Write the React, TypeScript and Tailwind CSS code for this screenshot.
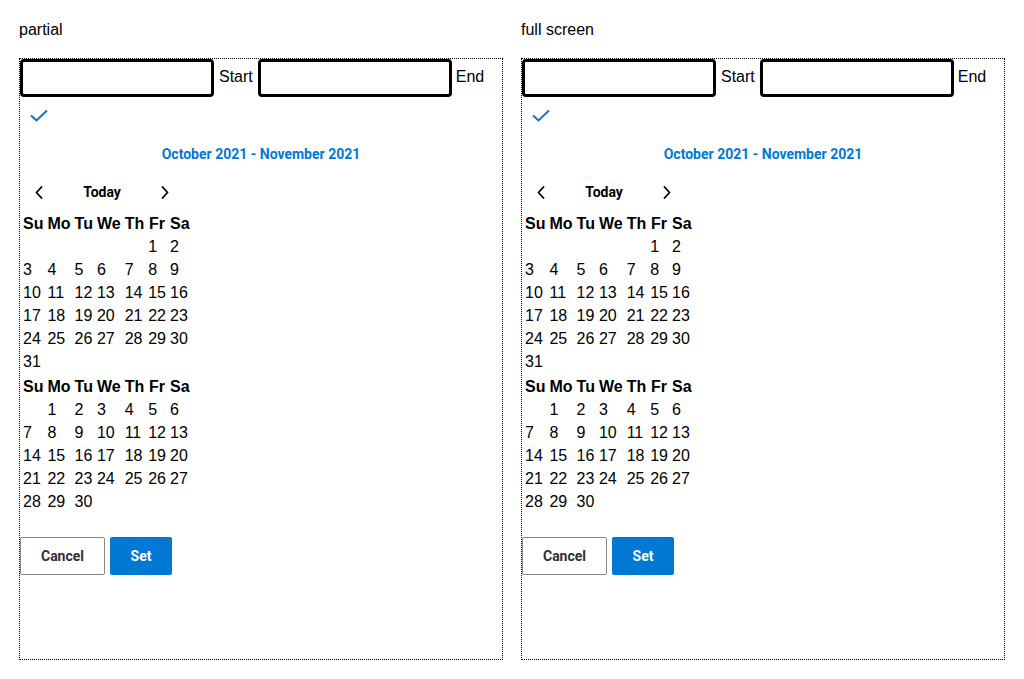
const octoberWeeks: (number | null)[][] = [
  [null, null, null, null, null, 1, 2],
  [3, 4, 5, 6, 7, 8, 9],
  [10, 11, 12, 13, 14, 15, 16],
  [17, 18, 19, 20, 21, 22, 23],
  [24, 25, 26, 27, 28, 29, 30],
  [31],
];

const novemberWeeks: (number | null)[][] = [
  [null, 1, 2, 3, 4, 5, 6],
  [7, 8, 9, 10, 11, 12, 13],
  [14, 15, 16, 17, 18, 19, 20],
  [21, 22, 23, 24, 25, 26, 27],
  [28, 29, 30],
];

const dayNames = ["Su", "Mo", "Tu", "We", "Th", "Fr", "Sa"];

function MonthTable({ weeks }: { weeks: (number | null)[][] }) {
  return (
    <table className="border-separate border-spacing-[2px] text-[16px] text-black">
      <thead>
        <tr>
          {dayNames.map((name) => (
            <th key={name} className="p-px text-center font-bold leading-[19px]">
              {name}
            </th>
          ))}
        </tr>
      </thead>
      <tbody>
        {weeks.map((week, i) => (
          <tr key={i}>
            {week.map((day, j) => (
              <td key={j} className="p-px text-left leading-[19px]">
                {day ?? ""}
              </td>
            ))}
          </tr>
        ))}
      </tbody>
    </table>
  );
}

function Chevron({ dir }: { dir: "left" | "right" }) {
  return (
    <svg width="8" height="13" viewBox="0 0 8 13" fill="none">
      <polyline
        points={dir === "left" ? "6.5,1 1.5,6.5 6.5,12" : "1.5,1 6.5,6.5 1.5,12"}
        stroke="#000"
        strokeWidth="1.8"
        strokeLinecap="round"
        strokeLinejoin="round"
      />
    </svg>
  );
}

function RangePicker() {
  return (
    <div className="h-[602px] w-[484px] border border-dotted border-black">
      <div className="flex h-[38px] items-center gap-[5px]">
        <input
          type="text"
          className="h-[38px] w-[194px] rounded-[4px] border-[3px] border-black bg-white outline-none"
        />
        <span className="mb-[2px]">Start</span>
        <input
          type="text"
          className="h-[38px] w-[194px] rounded-[4px] border-[3px] border-black bg-white outline-none"
        />
        <span className="mb-[2px] ml-[-1px]">End</span>
      </div>

      <div className="flex h-[36px] items-center pl-[10px]">
        <svg width="18" height="13" viewBox="0 0 18 13" fill="none">
          <polyline
            points="1,6.5 6.5,11.5 17,1.5"
            stroke="#0078d4"
            strokeWidth="2"
            strokeLinejoin="miter"
          />
        </svg>
      </div>

      <div className="flex h-[42px] items-center justify-center font-['Roboto',sans-serif] text-[14px] font-bold text-[#0078d4]">
        October 2021 - November 2021
      </div>

      <div className="flex h-[35px] items-center font-['Roboto',sans-serif] text-[14px] font-bold text-black">
        <button type="button" className="flex h-full w-[38px] items-center justify-center">
          <Chevron dir="left" />
        </button>
        <button type="button" className="h-full w-[88px]">
          Today
        </button>
        <button type="button" className="flex h-full w-[38px] items-center justify-center">
          <Chevron dir="right" />
        </button>
      </div>

      <div className="mt-px">
        <MonthTable weeks={octoberWeeks} />
        <MonthTable weeks={novemberWeeks} />
      </div>

      <div className="mt-[23px] flex gap-[5px] font-['Roboto',sans-serif] text-[14px] font-bold">
        <button
          type="button"
          className="h-[38px] w-[85px] rounded-[2px] border border-[#8a8886] bg-white text-[#323130]"
        >
          Cancel
        </button>
        <button
          type="button"
          className="h-[38px] w-[62px] rounded-[2px] bg-[#0078d4] text-white"
        >
          Set
        </button>
      </div>
    </div>
  );
}

export default function App() {
  return (
    <div className="flex gap-[18px] bg-white px-[19px] font-['Liberation_Sans',Arial,sans-serif] text-[16px] text-black">
      <div>
        <div className="pb-[16px] pt-[18px] leading-[24px]">partial</div>
        <RangePicker />
      </div>
      <div>
        <div className="pb-[16px] pt-[18px] leading-[24px]">full screen</div>
        <RangePicker />
      </div>
    </div>
  );
}
